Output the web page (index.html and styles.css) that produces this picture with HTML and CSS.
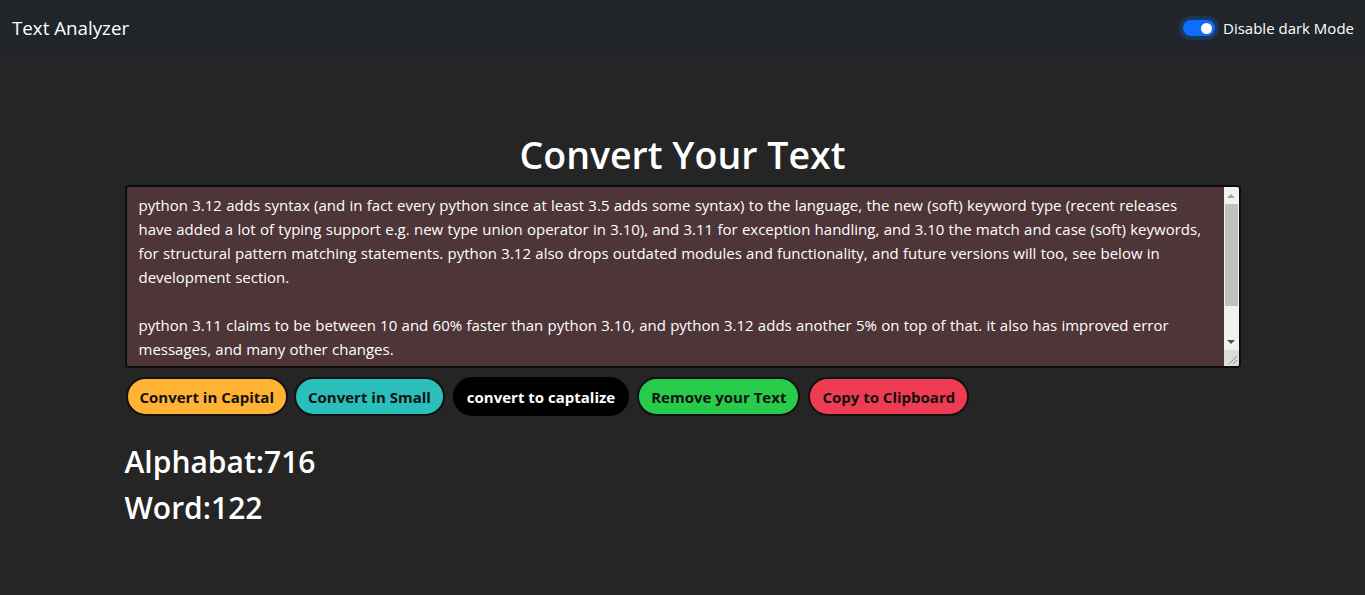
FILE: index.html
```html
<!DOCTYPE html>
<html lang="en">
<head>
<meta charset="utf-8">
<title>Text Analyzer</title>
<link rel="stylesheet" href="styles.css">
</head>
<body>
<nav class="navbar">
  <span class="brand">Text Analyzer</span>
  <label class="switch">
    <span class="switch-track"><span class="switch-knob"></span></span>
    <span class="switch-label">Disable dark Mode</span>
  </label>
</nav>
<main class="container">
  <h1 class="title">Convert Your Text</h1>
  <div class="editor">
    <textarea class="editor-input" rows="7">python 3.12 adds syntax (and in fact every python since at least 3.5 adds some syntax) to the language, the new (soft) keyword type (recent releases have added a lot of typing support e.g. new type union operator in 3.10), and 3.11 for exception handling, and 3.10 the match and case (soft) keywords, for structural pattern matching statements. python 3.12 also drops outdated modules and functionality, and future versions will too, see below in development section.

python 3.11 claims to be between 10 and 60% faster than python 3.10, and python 3.12 adds another 5% on top of that. it also has improved error messages, and many other changes.

python 3.13 introduces an experimental just-in-time compiler and an optional free-threaded build mode, which disables the global interpreter lock for better parallel performance.</textarea>
    <div class="scrollbar" aria-hidden="true">
      <span class="sb-btn"><span class="arrow-up"></span></span>
      <span class="sb-track"><span class="sb-thumb"></span></span>
      <span class="sb-btn"><span class="arrow-down"></span></span>
      <span class="sb-corner">
        <svg width="16" height="16" viewBox="0 0 16 16"><path d="M14 6L6 14M14 10L10 14" stroke="#8a8a8a" stroke-width="1" fill="none"/></svg>
      </span>
    </div>
  </div>
  <div class="actions">
    <button class="btn btn-yellow">Convert in Capital</button>
    <button class="btn btn-teal">Convert in Small</button>
    <button class="btn btn-black">convert to captalize</button>
    <button class="btn btn-green">Remove your Text</button>
    <button class="btn btn-red">Copy to Clipboard</button>
  </div>
  <h2 class="stat">Alphabat:716</h2>
  <h2 class="stat">Word:122</h2>
</main>
</body>
</html>
```
FILE: styles.css
```css
* { box-sizing: border-box; }
html, body { margin: 0; padding: 0; }
body {
  background: #252525;
  color: #fff;
  font-family: "Open Sans", "Noto Sans", sans-serif;
  font-size: 15px;
  line-height: 1.5;
  min-height: 595px;
}
.navbar {
  height: 56px;
  background: #212529;
  display: flex;
  align-items: center;
  justify-content: space-between;
  padding: 0 11px 0 12px;
}
.brand {
  font-size: 18.75px;
  color: #fff;
  line-height: 30px;
}
.switch {
  display: flex;
  align-items: center;
  gap: 8px;
}
.switch-track {
  width: 32px;
  height: 16px;
  border-radius: 8px;
  background: #0d6efd;
  box-shadow: 0 0 0 4px rgba(13, 110, 253, 0.25);
  display: flex;
  justify-content: flex-end;
  align-items: center;
  padding: 0 3px;
}
.switch-knob {
  width: 11px;
  height: 11px;
  border-radius: 50%;
  background: #fff;
}
.switch-label {
  font-size: 15px;
  color: #fff;
}
.container {
  width: 1116px;
  margin: 0 auto;
  padding-top: 75px;
}
.title {
  margin: 0 0 6px;
  font-size: 37.5px;
  line-height: 48px;
  font-weight: 600;
  text-align: center;
}
.editor {
  display: flex;
  height: 183px;
  background: #4e3538;
  border: 2px solid #0d0d0d;
  border-radius: 4px;
  overflow: hidden;
}
.editor-input {
  flex: 1;
  min-width: 0;
  height: 100%;
  margin: 0;
  padding: 6px 12px;
  background: transparent;
  color: #fff;
  border: none;
  outline: none;
  font-family: "Open Sans", "Noto Sans", sans-serif;
  font-size: 15px;
  line-height: 24px;
  word-spacing: 0.4px;
  resize: none;
  overflow: hidden;
}
.scrollbar {
  width: 15px;
  display: flex;
  flex-direction: column;
  background: #f1f1f1;
}
.sb-btn {
  height: 17px;
  display: flex;
  align-items: center;
  justify-content: center;
}
.arrow-up {
  width: 0;
  height: 0;
  border-left: 4px solid transparent;
  border-right: 4px solid transparent;
  border-bottom: 4px solid #a3a3a3;
}
.arrow-down {
  width: 0;
  height: 0;
  border-left: 4px solid transparent;
  border-right: 4px solid transparent;
  border-top: 4px solid #505050;
}
.sb-track {
  flex: 1;
  padding: 0 1px;
}
.sb-thumb {
  display: block;
  height: 102px;
  background: #c1c1c1;
}
.sb-corner {
  height: 16px;
  background: #dcdcdc;
  display: block;
}
.sb-corner svg { display: block; margin-left: -1px; }
.actions {
  display: flex;
  gap: 8px;
  margin: 9px 0 0;
}
.btn {
  height: 39px;
  padding: 0 12px;
  border: 2px solid #111;
  border-radius: 20px;
  font-family: "Open Sans", "Noto Sans", sans-serif;
  font-size: 15px;
  font-weight: 700;
  color: #111;
  cursor: pointer;
}
.btn-yellow { background: #ffb233; margin-right: -2px; margin-left: 1px; }
.btn-teal { background: #2abfbb; }
.btn-black { background: #000; color: #fff; border-color: #000; }
.btn-green { background: #27cc4b; }
.btn-red { background: #f03c52; }
.stat {
  margin: 0 0 8px;
  font-size: 30px;
  line-height: 38px;
  font-weight: 600;
}
.actions + .stat { margin-top: 27px; }
```
